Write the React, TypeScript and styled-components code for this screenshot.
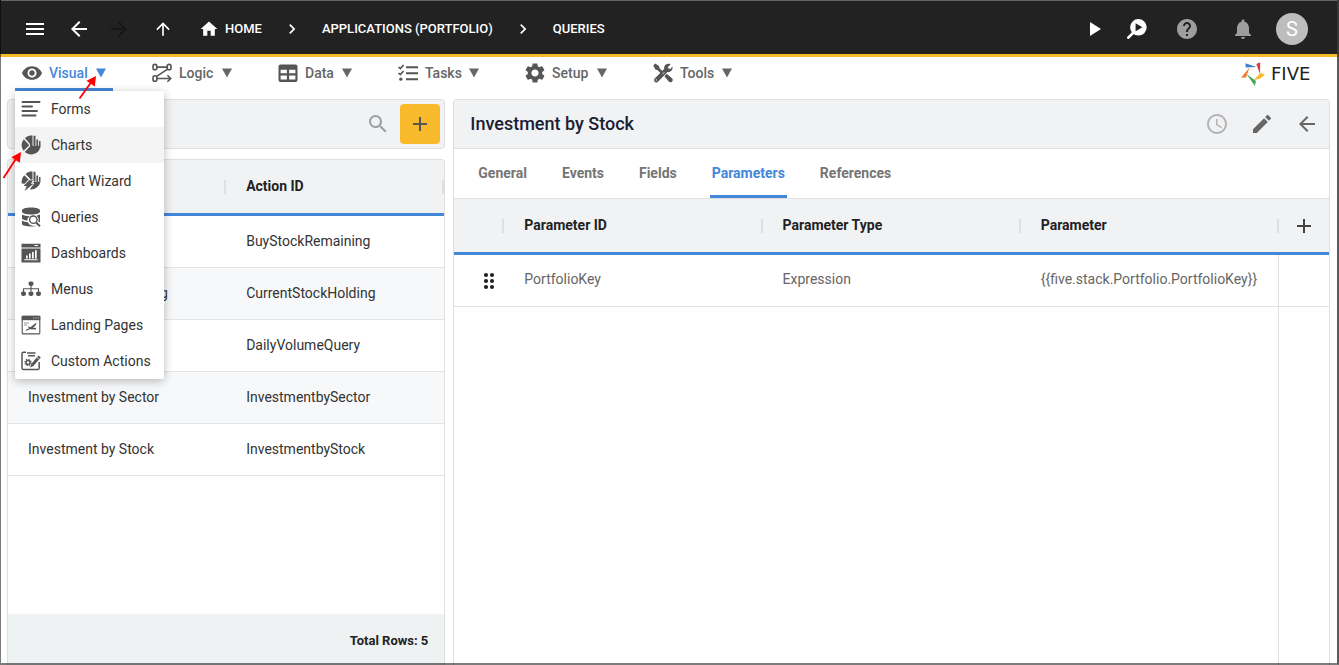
import React from "react";
import styled, { createGlobalStyle, css } from "styled-components";
import {
  MdAccessTime,
  MdAdd,
  MdArrowBack,
  MdArrowForward,
  MdArrowUpward,
  MdChevronRight,
  MdEdit,
  MdHelp,
  MdHome,
  MdMenu,
  MdNotifications,
  MdPlayArrow,
  MdRemoveRedEye,
  MdSearch,
  MdSettings,
} from "react-icons/md";

const color = {
  bar: "#222222",
  accent: "#f8b92a",
  blue: "#4487d9",
  panel: "#f1f2f4",
  line: "#dfdfdf",
  icon: "#555555",
};

const GlobalStyle = createGlobalStyle`
  *, *::before, *::after { box-sizing: border-box; }
  body {
    margin: 0;
    background: #ffffff;
    color: #333333;
    font-family: Roboto, "Liberation Sans", sans-serif;
    font-size: 14px;
    line-height: 20px;
  }
  button { font: inherit; color: inherit; background: none; border: 0; padding: 0; cursor: pointer; }
  a { color: inherit; text-decoration: none; }
  svg { display: block; flex: none; }
`;

const Page = styled.div`
  position: relative;
  height: 100vh;
  display: flex;
  flex-direction: column;
  overflow: hidden;
`;

const WindowFrame = styled.div`
  position: fixed;
  inset: 0;
  z-index: 10;
  pointer-events: none;
  border: solid rgba(0, 0, 0, 0.52);
  border-width: 0 2px 2px 1px;
  border-right-color: rgba(60, 60, 60, 0.85);
  box-shadow: inset 0 1px 0 #666666;
`;

const TopBar = styled.header`
  display: flex;
  align-items: center;
  flex: none;
  height: 57px;
  padding: 4px 31px 0 15px;
  background: ${color.bar};
  border-bottom: 3px solid ${color.accent};
  color: #ffffff;
`;

const NavButtons = styled.div`
  display: flex;
  gap: 4px;
`;

const ButtonPair = styled.div`
  display: flex;
`;

const BarButton = styled.button<{ $width?: number; $tint?: string }>`
  display: flex;
  align-items: center;
  justify-content: center;
  width: ${(p) => p.$width ?? 40}px;
  height: 40px;
  color: ${(p) => p.$tint ?? "#ffffff"};
`;

const Breadcrumbs = styled.nav`
  display: flex;
  align-items: center;
  gap: 20px;
  flex: 1;
  margin-left: 16px;
  font-size: 13px;
  font-weight: 500;
  text-transform: uppercase;
`;

const Crumb = styled.a`
  display: flex;
  align-items: center;
  gap: 6px;
  white-space: nowrap;
`;

const Avatar = styled.button`
  width: 32px;
  height: 32px;
  margin-left: 4px;
  border-radius: 50%;
  background: #bdbdbd;
  color: #ffffff;
  font-size: 20px;
`;

const MenuBar = styled.nav`
  display: flex;
  gap: 32px;
  flex: none;
  height: 42px;
  padding: 0 10px 0 15px;
`;

const MenuSlot = styled.div`
  position: relative;
  height: 34px;
`;

const MenuTitle = styled.button<{ $active?: boolean; $width: number }>`
  display: flex;
  align-items: center;
  gap: 7px;
  width: ${(p) => p.$width}px;
  height: 34px;
  padding: 0 7px;
  border-bottom: 3px solid ${(p) => (p.$active ? color.blue : "transparent")};
  border-radius: 2px 2px 0 0;
  color: ${(p) => (p.$active ? color.blue : "#666666")};
  font-weight: 500;

  & > svg:first-child { color: ${color.icon}; }
  & > svg:last-child { margin-left: auto; }
`;

const Dropdown = styled.ul`
  position: absolute;
  z-index: 3;
  top: 34px;
  left: 0;
  margin: 0;
  padding: 0;
  list-style: none;
  background: #ffffff;
  border-radius: 0 0 2px 2px;
  box-shadow: 0 2px 10px rgba(0, 0, 0, 0.28);
`;

const DropdownItem = styled.button<{ $hover?: boolean }>`
  display: flex;
  align-items: center;
  gap: 10px;
  width: 149px;
  height: 36px;
  padding: 0 6px;
  background: ${(p) => (p.$hover ? "#f4f4f4" : "transparent")};
  text-align: left;
  white-space: nowrap;

  & > svg { color: ${color.icon}; }
`;

const Brand = styled.a`
  display: flex;
  align-items: center;
  gap: 6px;
  width: 88px;
  height: 34px;
  margin-left: auto;
  color: #222222;
  font-family: "DejaVu Sans", sans-serif;
  font-size: 18px;
`;

const Workspace = styled.main`
  display: grid;
  grid-template-columns: minmax(0, 1fr) minmax(0, 2fr);
  gap: 8px;
  flex: 1;
  min-height: 0;
  padding: 0 9px 0 7px;
`;

const ListColumn = styled.section`
  display: flex;
  flex-direction: column;
  gap: 10px;
  min-height: 0;
`;

const SearchBar = styled.div`
  display: flex;
  align-items: center;
  justify-content: flex-end;
  gap: 10px;
  height: 50px;
  padding: 0 4px;
  background: ${color.panel};
  border: 1px solid ${color.line};
  border-radius: 4px;
`;

const SearchButton = styled.button`
  color: #999fa3;
`;

const AddButton = styled.button`
  display: flex;
  align-items: center;
  justify-content: center;
  width: 40px;
  height: 40px;
  border-radius: 4px;
  background: ${color.accent};
  color: ${color.icon};
`;

const Card = styled.div`
  display: flex;
  flex-direction: column;
  flex: 1;
  min-height: 0;
  border: 1px solid ${color.line};
  border-bottom: 0;
  border-radius: 4px 4px 0 0;
  overflow: hidden;
`;

const TableArea = styled.div`
  flex: 1;
  min-height: 0;
`;

const Table = styled.table<{ $fill?: boolean }>`
  width: 100%;
  ${(p) => p.$fill && css`height: 100%;`}
  table-layout: fixed;
  border-collapse: separate;
  border-spacing: 0;
`;

const HeadCell = styled.th<{ $tick?: boolean }>`
  position: relative;
  height: 56px;
  padding: 0 20px 2px;
  background: ${color.panel};
  border-bottom: 3px solid ${color.blue};
  color: #222222;
  font-weight: 700;
  text-align: left;
  white-space: nowrap;

  ${(p) =>
    p.$tick &&
    css`
      &::after {
        content: "";
        position: absolute;
        right: 0;
        top: 20px;
        width: 2px;
        height: 14px;
        background: ${color.line};
      }
    `}
`;

const ActionHeadCell = styled(HeadCell)`
  padding: 0 13px;
`;

const BodyCell = styled.td<{ $rule?: boolean }>`
  height: 52px;
  padding: 0 20px 2px;
  border-bottom: 1px solid #e3e3e3;
  ${(p) => p.$rule && css`border-right: 1px solid ${color.line};`}
  white-space: nowrap;
`;

const ValueCell = styled(BodyCell)`
  padding-bottom: 4px;
  color: #666666;
`;

const FillerCell = styled.td<{ $rule?: boolean }>`
  padding: 0;
  ${(p) => p.$rule && css`border-right: 1px solid ${color.line};`}
`;

const ListRow = styled.tr`
  &:nth-child(even) { background: #f7f8fa; }
`;

const CellIcon = styled.button`
  display: flex;
  justify-content: center;
  width: 24px;
  color: #444444;
`;

const HandleCell = styled(BodyCell)`
  padding: 0 23px;
`;

const HandleIcon = styled(CellIcon)`
  color: #222222;
`;

const Narrow = styled.col`
  width: 50px;
`;

const TotalBar = styled.footer`
  display: flex;
  align-items: center;
  justify-content: flex-end;
  flex: none;
  height: 51px;
  padding: 2px 16px 0;
  background: #eef2f3;
  color: #222222;
  font-size: 13px;
  font-weight: 700;
`;

const DetailHeader = styled.div`
  display: flex;
  align-items: center;
  gap: 21px;
  flex: none;
  height: 49px;
  padding: 0 10px 0 16px;
  background: ${color.panel};
  border-bottom: 1px solid ${color.line};
`;

const DetailTitle = styled.h1`
  flex: 1;
  margin: 0;
  color: #1a2033;
  font-size: 18px;
  font-weight: 500;
  line-height: 24px;
`;

const Tabs = styled.div`
  display: flex;
  gap: 31px;
  flex: none;
  height: 50px;
  padding: 0 22px;
  border-bottom: 1px solid ${color.line};
`;

const Tab = styled.button<{ $active?: boolean }>`
  height: 49px;
  padding: 1px 2px 0;
  border-bottom: 3px solid ${(p) => (p.$active ? color.blue : "transparent")};
  border-radius: 2px 2px 0 0;
  color: ${(p) => (p.$active ? color.blue : "#757575")};
  font-weight: 700;
`;

const Pointers = styled.svg`
  position: absolute;
  z-index: 5;
  top: 70px;
  left: 0;
  pointer-events: none;
`;

const Glyph = ({ children }: { children: React.ReactNode }) => (
  <svg width="20" height="20" viewBox="0 0 20 20" fill="currentColor" aria-hidden="true">
    {children}
  </svg>
);

const Caret = () => (
  <svg width="10" height="10" viewBox="0 0 10 10" fill="currentColor" aria-hidden="true">
    <path d="M0 .5h10L5 9.5z" />
  </svg>
);

const LogicIcon = () => (
  <Glyph>
    <g fill="none" stroke="currentColor" strokeWidth="1.6">
      <rect x="1" y="1.4" width="3.8" height="5.4" rx="1.8" />
      <rect x="15.2" y="1.4" width="3.8" height="5.4" rx="1.8" />
      <rect x="1" y="12.8" width="3.8" height="5.4" rx="1.8" />
      <path d="M4.8 4.1h10.4M15.5 6.2 4.7 13.3M4.8 15.5h13.6M15.4 12.3l3.3 3.2-3.3 3.2" />
    </g>
  </Glyph>
);

const DataIcon = () => (
  <Glyph>
    <path
      fillRule="evenodd"
      d="M2.5 1.5h15a2 2 0 0 1 2 2V17a2 2 0 0 1-2 2h-15a2 2 0 0 1-2-2V3.5a2 2 0 0 1 2-2zM2.6 6.8v3.5h6.3V6.800zm8.500 0v3.500h6.300V6.800zM2.600 12.500v4h6.300v-4zm8.500 0v4h6.300v-4z"
    />
  </Glyph>
);

const TasksIcon = () => (
  <Glyph>
    <g fill="none" stroke="currentColor" strokeWidth="1.7">
      <path d="M8 4.200h12M8 10.200h12M8 16.200h12" strokeWidth="2" />
      <path d="m.6 4 1.700 1.600L5.600 2M.6 10l1.700 1.600L5.600 8" />
    </g>
    <circle cx="2.8" cy="16.2" r="1.6" />
  </Glyph>
);

const ToolsIcon = () => (
  <Glyph>
    <path d="M2.200.6 6 3l.6 2.300 4 4-1.900 1.900-4-4L2.400 6.500.3 2.600z" />
    <path d="M17.700 1.300 14.800 4.200l1 1.500 1.600.4 2-2.500c.8 3.300-1.600 6-4.900 5.500L5 18.700a2.200 2.200 0 0 1-3.500-.3 2.200 2.200 0 0 1 .2-2.900L11.200 6C10.500 2.700 13.600-.3 17.700 1.300z" />
    <path d="m11.400 13.200 2.300-2.500 5.300 4.600c2.200 2.200-1.200 5.400-3.300 3.300z" />
    <circle cx="3.2" cy="17" r=".7" fill="#fff" />
    <path d="m11.300 9.300-1.700 1.700" stroke="#fff" strokeWidth=".8" />
  </Glyph>
);

const FormsIcon = () => (
  <Glyph>
    <path
      d="M1.500 2h17M1.500 6.500h9.500M1.500 11h14.500M1.500 15.500h13"
      stroke="currentColor"
      strokeWidth="2"
      strokeLinecap="round"
      transform="translate(0 1)"
    />
  </Glyph>
);

const ChartsIcon = () => (
  <Glyph>
    <path d="M9.800.4v9.500L3.900 3.100A9.700 9.700 0 0 1 9.800.4z" />
    <path d="M2.800 4.200 8.300 10.300 2.600 15.800A9.600 9.600 0 0 1 2.800 4.200z" />
    <path d="M9.600 10.800h10.100A9.700 9.700 0 0 1 3.700 17z" />
    <path d="M9 .4h2.500v10.800H9zM12.500.8h2v10h-2zM15.400 4.500h1.700v6.500h-1.700zM18 6h1.500v5H18z" />
  </Glyph>
);

const WizardIcon = () => (
  <Glyph>
    <path d="M9 .5h2.500v8H9zM12.500.8h2v9.500h-2zM15.400 4.500h1.700v6h-1.700zM18 6h1.500v4.500H18z" />
    <path d="M9.800.5v8L4.500 3A9.300 9.300 0 0 1 9.800.5z" />
    <path d="M3.200 4.200 7.600 8.600 3.500 12.800.8 12.500A9.500 9.500 0 0 1 3.200 4.200z" />
    <path d="M13.600 10.400h6A9.700 9.700 0 0 1 8.900 18.300l4.600-6.400h-2z" />
    <path d="M8 9.300h4l-2.100 3.500h2.600L3.600 20l2.100-4.900H2.500z" />
  </Glyph>
);

const QueriesIcon = () => (
  <Glyph>
    <path d="M1 3.200C1 1.600 5 .4 10 .4s9 1.200 9 2.800v1.600c0 1.600-4 2.700-9 2.700S1 6.400 1 4.800z" />
    <path d="M1 7.600c2 1.300 5.200 1.600 8 1.600-2 1-2.700 2.600-2.600 4.200-3-.2-5.400-1-5.400-2.200z" />
    <path d="M1 13.600c1.500 1 3.800 1.500 5.800 1.600a6 6 0 0 0 4.700 3.500l4 .4c-4.500 1-14.500.5-14.500-2.300z" />
    <circle cx="12.3" cy="12.7" r="3.7" fill="none" stroke="currentColor" strokeWidth="1.4" />
    <path d="m15 15.500 4 3.800" stroke="currentColor" strokeWidth="1.9" />
    <path d="M15.500 8.700 19 7.500v8l-1.700-1c.8-2.300.2-4.500-1.800-5.800z" />
  </Glyph>
);

const DashboardsIcon = () => (
  <Glyph>
    <path
      fillRule="evenodd"
      d="M.5.800h19v3.700H.5zM13.500 1.900v1h3.500v-1zM.5 5.500h19v14H.5zM3.300 16.200v1h13.400v-1zM5 12.600v3h1.700v-3zM8 10.600v5h1.700v-5zM11 9v6.600h1.700V9zM14 7.200v8.400h1.700V7.200z"
    />
  </Glyph>
);

const MenusIcon = () => (
  <Glyph>
    <rect x="7.5" y="2.5" width="5" height="4.4" rx="1.8" />
    <rect x="0" y="12.5" width="5" height="4.4" rx="1.8" />
    <rect x="7.5" y="12.5" width="5" height="4.4" rx="1.8" />
    <rect x="15" y="12.5" width="5" height="4.4" rx="1.8" />
    <path d="M10 6.500v6M2.500 13V9.700h15V13" fill="none" stroke="currentColor" strokeWidth="1.1" />
  </Glyph>
);

const LandingIcon = () => (
  <Glyph>
    <path d="M.7.800h18.600v4.400H.7z" />
    <path d="M12 3h1.300M14.300 3h1.300M16.600 3h1.300" stroke="#bbb" />
    <rect x="1.2" y="1.3" width="17.6" height="17.6" rx="1" fill="none" stroke="currentColor" strokeWidth="1.1" />
    <path d="M3 8h5M3 10h3" stroke="currentColor" strokeWidth=".6" />
    <path d="M15.500 7.500c-.3 3-2 4-3.700 5l3.500.6-.6 1.300-6-.2-4 1.800.7-1.700 2.500-.9-1-2.200 2.500 1.100z" />
  </Glyph>
);

const CustomActionsIcon = () => (
  <Glyph>
    <path
      d="M5 1.300H2.600a1.600 1.600 0 0 0-1.600 1.600v14a1.600 1.600 0 0 0 1.600 1.600h14a1.600 1.600 0 0 0 1.600-1.600V11"
      fill="none"
      stroke="currentColor"
      strokeWidth="1.5"
    />
    <path d="M6 2h8.500M7 4.700h7" stroke="currentColor" strokeWidth="1.4" />
    <circle cx="7" cy="11.4" r="2" fill="none" stroke="currentColor" strokeWidth="1.5" />
    <circle cx="7" cy="11.4" r="3.1" fill="none" stroke="currentColor" strokeWidth="1.2" strokeDasharray="1.3 1.13" />
    <path d="m17.500 4.500 2.300 1.900-7.400 8.600-3.300 1.600 1.100-3.500z" />
    <path d="m16 6.300 2.300 1.800" stroke="#fff" strokeWidth=".7" />
  </Glyph>
);

const DeployIcon = () => (
  <Glyph>
    <path d="M6.500 13.500 1.300 18.700" stroke="currentColor" strokeWidth="2.6" strokeLinecap="round" />
    <path fillRule="evenodd" d="M11.400 0a8.300 8.300 0 1 1 0 16.600 8.300 8.300 0 0 1 0-16.600zM8.600 4.300v8l6.800-4z" />
  </Glyph>
);

const DragIcon = () => (
  <Glyph>
    {[4, 10, 16].map((y) => (
      <React.Fragment key={y}>
        <circle cx="7" cy={y} r="2.1" />
        <circle cx="13" cy={y} r="2.1" />
      </React.Fragment>
    ))}
  </Glyph>
);

const BrandMark = () => (
  <svg width="24" height="24" viewBox="0 0 24 24" aria-hidden="true">
    <path d="M4.500 1.200 15.600 5 4.700 5.400z" fill="#3d7fd6" />
    <path d="M19.200.2 19 12 15.300 2z" fill="#e8363c" />
    <path d="m24 12.800-5.300 3.900-6 1.300 7-7z" fill="#fbb829" />
    <path d="M5.700 12.200 15 19l-1.200 5z" fill="#43a85c" />
    <path d="M8.500 5.600 5 15.600 0 15.800z" fill="#f47b2f" />
  </svg>
);

const menus = [
  { label: "Logic", icon: <LogicIcon />, width: 94 },
  { label: "Data", icon: <DataIcon />, width: 88 },
  { label: "Tasks", icon: <TasksIcon />, width: 95 },
  { label: "Setup", icon: <MdSettings size={20} viewBox="2 2 20 20" />, width: 96 },
  { label: "Tools", icon: <ToolsIcon />, width: 93 },
];

const visualItems = [
  { label: "Forms", icon: <FormsIcon /> },
  { label: "Charts", icon: <ChartsIcon />, hover: true },
  { label: "Chart Wizard", icon: <WizardIcon /> },
  { label: "Queries", icon: <QueriesIcon /> },
  { label: "Dashboards", icon: <DashboardsIcon /> },
  { label: "Menus", icon: <MenusIcon /> },
  { label: "Landing Pages", icon: <LandingIcon /> },
  { label: "Custom Actions", icon: <CustomActionsIcon /> },
];

const queries = [
  { id: "BuyStockRemaining" },
  { name: "Current Stock\u00a0 Holding", id: "CurrentStockHolding" },
  { id: "DailyVolumeQuery" },
  { name: "Investment by Sector", id: "InvestmentbySector" },
  { name: "Investment by Stock", id: "InvestmentbyStock" },
];

const tabs = ["General", "Events", "Fields", "Parameters", "References"];

export default function App() {
  return (
    <Page>
      <GlobalStyle />
      <TopBar>
        <NavButtons>
          <BarButton aria-label="Menu"><MdMenu size={24} /></BarButton>
          <ButtonPair>
            <BarButton aria-label="Back"><MdArrowBack size={24} /></BarButton>
            <BarButton aria-label="Forward" $tint="#161616"><MdArrowForward size={24} /></BarButton>
          </ButtonPair>
          <BarButton aria-label="Up"><MdArrowUpward size={20} /></BarButton>
        </NavButtons>
        <Breadcrumbs aria-label="Breadcrumb">
          <Crumb href="#home"><MdHome size={20} />Home</Crumb>
          <MdChevronRight size={20} />
          <Crumb href="#applications">Applications (Portfolio)</Crumb>
          <MdChevronRight size={20} />
          <Crumb href="#queries">Queries</Crumb>
        </Breadcrumbs>
        <BarButton aria-label="Run"><MdPlayArrow size={24} /></BarButton>
        <BarButton aria-label="Inspect" $width={46}><DeployIcon /></BarButton>
        <BarButton aria-label="Help" $width={54} $tint="#9e9e9e"><MdHelp size={24} /></BarButton>
        <BarButton aria-label="Notifications" $width={58} $tint="#9e9e9e"><MdNotifications size={24} /></BarButton>
        <Avatar>S</Avatar>
      </TopBar>

      <MenuBar>
        <MenuSlot>
          <MenuTitle $active $width={98}>
            <MdRemoveRedEye size={20} viewBox="1 1 22 22" />Visual<Caret />
          </MenuTitle>
          <Dropdown>
            {visualItems.map((item) => (
              <li key={item.label}>
                <DropdownItem $hover={item.hover}>{item.icon}{item.label}</DropdownItem>
              </li>
            ))}
          </Dropdown>
        </MenuSlot>
        {menus.map((menu) => (
          <MenuSlot key={menu.label}>
            <MenuTitle $width={menu.width}>{menu.icon}{menu.label}<Caret /></MenuTitle>
          </MenuSlot>
        ))}
        <Brand href="#five"><BrandMark />FIVE</Brand>
      </MenuBar>

      <Workspace>
        <ListColumn>
          <SearchBar>
            <SearchButton aria-label="Search"><MdSearch size={24} /></SearchButton>
            <AddButton aria-label="Add query"><MdAdd size={24} /></AddButton>
          </SearchBar>
          <Card>
            <TableArea>
              <Table>
                <thead>
                  <tr>
                    <HeadCell $tick />
                    <HeadCell $tick>Action ID</HeadCell>
                  </tr>
                </thead>
                <tbody>
                  {queries.map((query) => (
                    <ListRow key={query.id}>
                      <BodyCell>{query.name}</BodyCell>
                      <BodyCell>{query.id}</BodyCell>
                    </ListRow>
                  ))}
                </tbody>
              </Table>
            </TableArea>
            <TotalBar>Total Rows: 5</TotalBar>
          </Card>
        </ListColumn>

        <Card>
          <DetailHeader>
            <DetailTitle>Investment by Stock</DetailTitle>
            <CellIcon aria-label="History"><MdAccessTime size={24} color="#b5b5b5" /></CellIcon>
            <CellIcon aria-label="Edit"><MdEdit size={24} color="#666666" /></CellIcon>
            <CellIcon aria-label="Close"><MdArrowBack size={24} color="#666666" /></CellIcon>
          </DetailHeader>
          <Tabs role="tablist">
            {tabs.map((tab) => (
              <Tab key={tab} role="tab" aria-selected={tab === "Parameters"} $active={tab === "Parameters"}>
                {tab}
              </Tab>
            ))}
          </Tabs>
          <TableArea>
            <Table $fill>
              <colgroup>
                <Narrow />
                <col />
                <col />
                <col />
                <Narrow />
              </colgroup>
              <thead>
                <tr>
                  <HeadCell $tick />
                  <HeadCell $tick>Parameter ID</HeadCell>
                  <HeadCell $tick>Parameter Type</HeadCell>
                  <HeadCell $tick>Parameter</HeadCell>
                  <ActionHeadCell>
                    <CellIcon aria-label="Add parameter"><MdAdd size={24} /></CellIcon>
                  </ActionHeadCell>
                </tr>
              </thead>
              <tbody>
                <tr>
                  <HandleCell>
                    <HandleIcon aria-label="Reorder"><DragIcon /></HandleIcon>
                  </HandleCell>
                  <ValueCell>PortfolioKey</ValueCell>
                  <ValueCell>Expression</ValueCell>
                  <ValueCell $rule>{"{{five.stack.Portfolio.PortfolioKey}}"}</ValueCell>
                  <BodyCell />
                </tr>
                <tr>
                  <FillerCell colSpan={4} $rule />
                  <FillerCell />
                </tr>
              </tbody>
            </Table>
          </TableArea>
        </Card>
      </Workspace>

      <Pointers width="110" height="112" viewBox="0 0 110 112" aria-hidden="true">
        <g stroke="#ff0000" strokeWidth="1.8" fill="#ff0000">
          <path d="M79.500 28.500 91 12.500" />
          <path d="M96 6 94.800 16.500 86.500 10.800z" strokeWidth="0" />
          <path d="M3.500 108 15.500 89.500" />
          <path d="M21 82 19.800 92.800 11.300 87.200z" strokeWidth="0" />
        </g>
      </Pointers>
      <WindowFrame />
    </Page>
  );
}
